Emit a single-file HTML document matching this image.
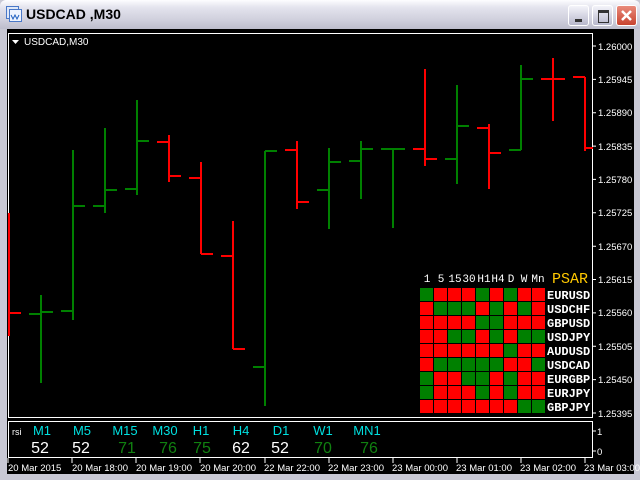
<!DOCTYPE html>
<html><head><meta charset="utf-8"><style>
*{margin:0;padding:0}
body{width:640px;height:480px;overflow:hidden;background:#c8c8d4;position:relative;font-family:"Liberation Sans",sans-serif}
.title{position:absolute;left:0;top:0;width:640px;height:29px;background:linear-gradient(#fdfdff 0%,#e4e4ee 25%,#cfcfdc 70%,#bdbdcc 100%);border-radius:6px 6px 0 0}
.ttext{position:absolute;left:26px;top:6px;font-weight:bold;font-size:14px;color:#000}
.btn{position:absolute;top:5px;width:21px;height:21px;border:1px solid #fff;border-radius:3px;box-sizing:border-box;background:linear-gradient(#f4f4fa,#b8b8cc)}
.close{background:linear-gradient(#e98b7c,#c8432f)}
</style></head><body>
<div class="title">
<svg style="position:absolute;left:6px;top:6px" width="16" height="16"><rect x="0.5" y="0.5" width="12" height="12" fill="#dfe8f8" stroke="#4a78c8"/><rect x="3.5" y="3.5" width="12" height="12" fill="#eef4ff" stroke="#4a78c8"/><path d="M5 9 l2 4 l2-4 l2 4 l2-4" stroke="#2060c0" fill="none"/></svg>
<div class="ttext">USDCAD ,M30</div>
<div class="btn" style="left:568px"><div style="position:absolute;left:6px;top:13px;width:7px;height:3px;background:#333"></div></div>
<div class="btn" style="left:592px"><div style="position:absolute;left:5px;top:4px;width:9px;height:9px;border:1px solid #333;border-top-width:3px"></div></div>
<div class="btn close" style="left:616px"><svg width="19" height="19" style="position:absolute;left:0;top:0"><path d="M5 5 L14 14 M14 5 L5 14" stroke="#fff" stroke-width="2.5"/></svg></div>
</div>
<svg style="position:absolute;left:0;top:0" width="640" height="480">
<rect x="7" y="29" width="627" height="445" fill="#000"/>
<rect x="8.5" y="33.5" width="584" height="384" fill="none" stroke="#fff"/>
<rect x="8.5" y="421.5" width="584" height="36" fill="none" stroke="#fff"/>
<g stroke-width="2" fill="none">
<g stroke="#ff0000">
<path d="M9 213V336M9 313H21"/>
<path d="M169 135V182M157 142H169M169 176H181"/>
<path d="M201 162V254M189 178H201M201 254H213"/>
<path d="M233 221V349M221 256H233M233 349H245"/>
<path d="M297 141V209M285 150H297M297 202H309"/>
<path d="M425 69V166M413 149H425M425 159H437"/>
<path d="M489 124V189M477 128H489M489 153H501"/>
<path d="M553 58V121M541 79H553M553 79H565"/>
<path d="M585 77V151M573 77H585M585 148H593"/>
</g>
<g stroke="#008000">
<path d="M41 295V383M29 314H41M41 312H53"/>
<path d="M73 150V320M61 311H73M73 206H85"/>
<path d="M105 128V213M93 206H105M105 190H117"/>
<path d="M137 100V195M125 189H137M137 141H149"/>
<path d="M265 151V406M253 367H265M265 151H277"/>
<path d="M329 148V229M317 190H329M329 162H341"/>
<path d="M361 141V199M349 161H361M361 149H373"/>
<path d="M393 149V228M381 149H393M393 149H405"/>
<path d="M457 85V184M445 159H457M457 126H469"/>
<path d="M521 65V150M509 150H521M521 79H533"/>
</g>
</g>
<path d="M12 40h7l-3.5 4z" fill="#fff"/>
<text x="24" y="45" fill="#fff" font-size="10">USDCAD,M30</text>
<g fill="#fff" font-size="9.5" stroke="#fff">
<path d="M593 46h3M593 79.4h3M593 112.7h3M593 146.1h3M593 179.4h3M593 212.8h3M593 246.2h3M593 279.5h3M593 312.9h3M593 346.2h3M593 379.6h3M593 413h3M593 431h3M593 451h3"/>
</g>
<g fill="#fff" font-size="9.5">
<text x="598" y="50">1.26000</text><text x="598" y="83">1.25945</text><text x="598" y="116">1.25890</text><text x="598" y="150">1.25835</text><text x="598" y="183">1.25780</text><text x="598" y="216">1.25725</text><text x="598" y="250">1.25670</text><text x="598" y="283">1.25615</text><text x="598" y="316">1.25560</text><text x="598" y="350">1.25505</text><text x="598" y="383">1.25450</text><text x="598" y="417">1.25395</text>
<text x="597" y="435">1</text><text x="597" y="455">0</text>
<text x="12" y="435" font-size="9">rsi</text>
</g>
<g fill="#fff" font-size="9.5" stroke="none">
<text x="8" y="471">20 Mar 2015</text><text x="72" y="471">20 Mar 18:00</text><text x="136" y="471">20 Mar 19:00</text><text x="200" y="471">20 Mar 20:00</text><text x="264" y="471">22 Mar 22:00</text><text x="328" y="471">22 Mar 23:00</text><text x="392" y="471">23 Mar 00:00</text><text x="456" y="471">23 Mar 01:00</text><text x="520" y="471">23 Mar 02:00</text><text x="584" y="471">23 Mar 03:00</text>
</g>
<path d="M8 458v5M72 458v5M136 458v5M200 458v5M265 458v5M329 458v5M393 458v5M457 458v5M521 458v5M585 458v5" stroke="#fff"/>
<g fill="#00e0e0" font-size="13" text-anchor="middle">
<text x="42" y="435">M1</text><text x="82" y="435">M5</text><text x="125" y="435">M15</text><text x="165" y="435">M30</text><text x="201" y="435">H1</text><text x="241" y="435">H4</text><text x="281" y="435">D1</text><text x="323" y="435">W1</text><text x="367" y="435">MN1</text>
</g>
<g font-size="16" text-anchor="middle">
<text x="40" y="453" fill="#fff">52</text><text x="81" y="453" fill="#fff">52</text><text x="127" y="453" fill="#108010">71</text><text x="168" y="453" fill="#108010">76</text><text x="202" y="453" fill="#108010">75</text><text x="241" y="453" fill="#fff">62</text><text x="280" y="453" fill="#fff">52</text><text x="323" y="453" fill="#108010">70</text><text x="369" y="453" fill="#108010">76</text>
</g>
<g id="m"></g>
<g font-family="Liberation Mono,monospace" fill="#fff" font-size="11" text-anchor="middle">
<text x="427" y="282">1</text><text x="441" y="282">5</text><text x="455" y="282">15</text><text x="469" y="282">30</text><text x="484" y="282">H1</text><text x="498" y="282">H4</text><text x="511" y="282">D</text><text x="524" y="282">W</text><text x="538" y="282">Mn</text>
</g>
<text x="552" y="283" fill="#ffc800" font-family="Liberation Mono,monospace" font-size="15">PSAR</text>
<g font-family="Liberation Mono,monospace" fill="#fff" font-size="12" font-weight="bold">
<text x="547" y="299">EURUSD</text><text x="547" y="313">USDCHF</text><text x="547" y="327">GBPUSD</text><text x="547" y="341">USDJPY</text><text x="547" y="355">AUDUSD</text><text x="547" y="369">USDCAD</text><text x="547" y="383">EURGBP</text><text x="547" y="397">EURJPY</text><text x="547" y="411">GBPJPY</text>
</g>
<g id="grid">
</g>
</svg>
<svg style="position:absolute;left:420px;top:288px" width="126" height="126">
<defs><rect id="r" width="13" height="13" fill="#ff0000"/><rect id="g" width="13" height="13" fill="#008000"/></defs>
<!-- row1 GRRRGRGRR -->
<use href="#g" x="0" y="0"/><use href="#r" x="14" y="0"/><use href="#r" x="28" y="0"/><use href="#r" x="42" y="0"/><use href="#g" x="56" y="0"/><use href="#r" x="70" y="0"/><use href="#g" x="84" y="0"/><use href="#r" x="98" y="0"/><use href="#r" x="112" y="0"/>
<use href="#r" x="0" y="14"/><use href="#g" x="14" y="14"/><use href="#g" x="28" y="14"/><use href="#g" x="42" y="14"/><use href="#r" x="56" y="14"/><use href="#g" x="70" y="14"/><use href="#r" x="84" y="14"/><use href="#g" x="98" y="14"/><use href="#r" x="112" y="14"/>
<use href="#r" x="0" y="28"/><use href="#r" x="14" y="28"/><use href="#r" x="28" y="28"/><use href="#r" x="42" y="28"/><use href="#g" x="56" y="28"/><use href="#g" x="70" y="28"/><use href="#r" x="84" y="28"/><use href="#r" x="98" y="28"/><use href="#r" x="112" y="28"/>
<use href="#r" x="0" y="42"/><use href="#r" x="14" y="42"/><use href="#g" x="28" y="42"/><use href="#g" x="42" y="42"/><use href="#r" x="56" y="42"/><use href="#g" x="70" y="42"/><use href="#r" x="84" y="42"/><use href="#g" x="98" y="42"/><use href="#g" x="112" y="42"/>
<use href="#r" x="0" y="56"/><use href="#r" x="14" y="56"/><use href="#r" x="28" y="56"/><use href="#r" x="42" y="56"/><use href="#r" x="56" y="56"/><use href="#r" x="70" y="56"/><use href="#g" x="84" y="56"/><use href="#r" x="98" y="56"/><use href="#r" x="112" y="56"/>
<use href="#r" x="0" y="70"/><use href="#g" x="14" y="70"/><use href="#g" x="28" y="70"/><use href="#g" x="42" y="70"/><use href="#g" x="56" y="70"/><use href="#g" x="70" y="70"/><use href="#r" x="84" y="70"/><use href="#r" x="98" y="70"/><use href="#g" x="112" y="70"/>
<use href="#g" x="0" y="84"/><use href="#r" x="14" y="84"/><use href="#r" x="28" y="84"/><use href="#g" x="42" y="84"/><use href="#g" x="56" y="84"/><use href="#r" x="70" y="84"/><use href="#g" x="84" y="84"/><use href="#r" x="98" y="84"/><use href="#r" x="112" y="84"/>
<use href="#g" x="0" y="98"/><use href="#r" x="14" y="98"/><use href="#r" x="28" y="98"/><use href="#r" x="42" y="98"/><use href="#g" x="56" y="98"/><use href="#r" x="70" y="98"/><use href="#g" x="84" y="98"/><use href="#r" x="98" y="98"/><use href="#r" x="112" y="98"/>
<use href="#r" x="0" y="112"/><use href="#r" x="14" y="112"/><use href="#r" x="28" y="112"/><use href="#r" x="42" y="112"/><use href="#r" x="56" y="112"/><use href="#r" x="70" y="112"/><use href="#r" x="84" y="112"/><use href="#g" x="98" y="112"/><use href="#g" x="112" y="112"/>
</svg>
</body></html>
